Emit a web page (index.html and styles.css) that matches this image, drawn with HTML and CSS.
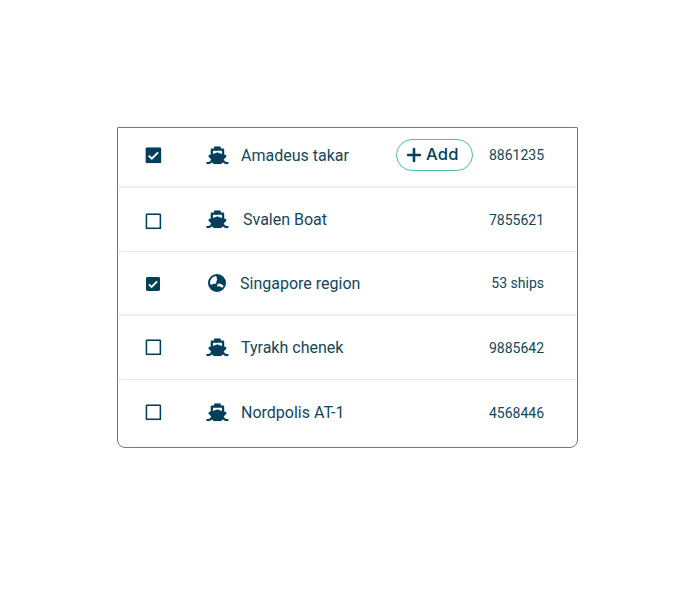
FILE: index.html
```html
<!DOCTYPE html>
<html lang="en">
<head>
<meta charset="utf-8">
<title>Ships</title>
<link rel="stylesheet" href="styles.css">
</head>
<body>
<svg class="defs" aria-hidden="true">
  <symbol id="ship" viewBox="0 0 640 512"><path d="M496.616 372.639l70.012-70.012c16.899-16.9 9.942-45.771-12.836-53.092L512 236.102V96c0-17.673-14.327-32-32-32h-64V24c0-13.255-10.745-24-24-24H248c-13.255 0-24 10.745-24 24v40h-64c-17.673 0-32 14.327-32 32v140.102l-41.792 13.433c-22.753 7.313-29.754 36.173-12.836 53.092l70.012 70.012C125.828 416.287 85.587 448 24 448c-13.255 0-24 10.745-24 24v16c0 13.255 10.745 24 24 24 61.023 0 107.499-20.61 143.258-59.396C181.677 487.432 216.021 512 256 512h128c39.979 0 74.323-24.568 88.742-59.396C508.495 491.384 554.968 512 616 512c13.255 0 24-10.745 24-24v-16c0-13.255-10.745-24-24-24-60.817 0-101.542-31.001-119.384-75.361zM192 128h256v87.531l-118.208-37.995a31.995 31.995 0 0 0-19.584 0L192 215.531V128z"/></symbol>
  <symbol id="checked" viewBox="0 0 16 16"><rect width="16" height="16" rx="1.6"/><path d="M3.3 8.3l3.1 3.1 6.3-6.3" fill="none" stroke="#fff" stroke-width="2"/></symbol>
  <symbol id="empty" viewBox="0 0 16 16"><rect x=".9" y=".9" width="14.2" height="14.2" rx="1" fill="none" stroke="currentColor" stroke-width="1.8"/></symbol>
  <symbol id="globe" viewBox="0 0 18 18"><circle cx="9" cy="9" r="9"/><path fill="#fff" d="M7.6 2L8.9 3.1 8.6 4.6 9.3 5.6 8.3 7.4 8.5 9 6.8 10 5 9.8 4.2 10.8 2.2 10.2C1.6 6.2 3.8 2.9 7.6 2zM8.8 11.2L10.6 9.6 13.2 9.9 14.6 11.2 15.6 11.6 14.8 13.4 12.9 13.2 11.6 12.1 9.8 12.7z"/></symbol>
</svg>
<main class="list">
  <div class="row first">
    <svg class="box"><use href="#checked"/></svg>
    <svg class="ship"><use href="#ship"/></svg>
    <span class="name">Amadeus takar</span>
    <button class="add"><svg class="plus" viewBox="0 0 14 14"><path d="M7 1.1v11.8M1.1 7h11.8"/></svg><span class="label">Add</span></button>
    <span class="value">8861235</span>
  </div>
  <div class="row second">
    <svg class="box"><use href="#empty"/></svg>
    <svg class="ship"><use href="#ship"/></svg>
    <span class="name">Svalen Boat</span>
    <span class="value">7855621</span>
  </div>
  <div class="row third">
    <svg class="box small"><use href="#checked"/></svg>
    <svg class="globe"><use href="#globe"/></svg>
    <span class="name">Singapore region</span>
    <span class="value">53 ships</span>
  </div>
  <div class="row fourth">
    <svg class="box"><use href="#empty"/></svg>
    <svg class="ship"><use href="#ship"/></svg>
    <span class="name">Tyrakh chenek</span>
    <span class="value">9885642</span>
  </div>
  <div class="row fifth">
    <svg class="box"><use href="#empty"/></svg>
    <svg class="ship"><use href="#ship"/></svg>
    <span class="name">Nordpolis AT-1</span>
    <span class="value">4568446</span>
  </div>
</main>
</body>
</html>
```
FILE: styles.css
```css
* { box-sizing: border-box; }
body { margin: 0; padding: 127px 0 0 117px; background: #fff; color: #023f5a; font-family: Roboto, sans-serif; }
.defs { display: none; }
.list { width: 461px; height: 321px; border: 1px solid #5f808d; border-radius: 1px 1px 8px 8px; }
.row { display: grid; grid-template-columns: 60px 35px 155px 1fr 71px; align-items: start; padding: 0 33px 0 28px; height: 64px; border-bottom: 1px solid #e1e8ea; }
.row svg { display: block; fill: currentColor; overflow: visible; }
.box { grid-column: 1; width: 16px; height: 16px; margin: 25px 0 0; }
.box use { transform: translate(-0.6px, 0.3px); }
.box.small { width: 14px; height: 14px; }
.box.small use { transform: none; }
.ship { grid-column: 2; width: 22.5px; height: 18px; margin-top: 22px; }
.ship use { transform: translate(0.2px, 0.3px); }
.globe { grid-column: 2; width: 18px; height: 18px; margin: 22px 0 0 2px; }
.name { grid-column: 3; margin-top: 20px; font-size: 16px; line-height: 24px; white-space: nowrap; }
.name, .value { color: #10475f; font-weight: 400; }
.value { grid-column: 5; margin-top: 20px; font-size: 14px; line-height: 24px; text-align: right; white-space: nowrap; }
.first { height: 60px; border-bottom: 2px solid #edf3f4; }
.first .box { margin-top: 19px; }
.first .ship { margin-top: 18px; }
.first .name { margin-top: 16px; }
.first .value { margin-top: 15px; }
.second .name { padding-left: 2px; }
.third { border-bottom: 2px solid #edf3f4; }
.third .name { margin-left: -1px; }
.third .value { margin-top: 19px; }
.fourth .box { margin-top: 23px; }
.fifth { height: 67px; border-bottom: 0; }
.fifth .box { margin-top: 24px; }
.fifth .ship { margin-top: 23px; }
.fifth .name, .fifth .value { margin-top: 21px; }
.add { grid-column: 4; display: flex; align-items: center; gap: 5px; width: 77px; height: 32px; margin-top: 11px; padding: 0 0 0 10px; border: 1px solid #4fbfb0; border-radius: 16px; background: #fff; color: inherit; font: 500 16.5px/20px Inter, sans-serif; letter-spacing: 0.3px; }
.label { padding-bottom: 2px; }
.plus { width: 14px; height: 14px; flex: none; }
.plus path { fill: none; stroke: currentColor; stroke-width: 2.6; stroke-linecap: round; }
```
